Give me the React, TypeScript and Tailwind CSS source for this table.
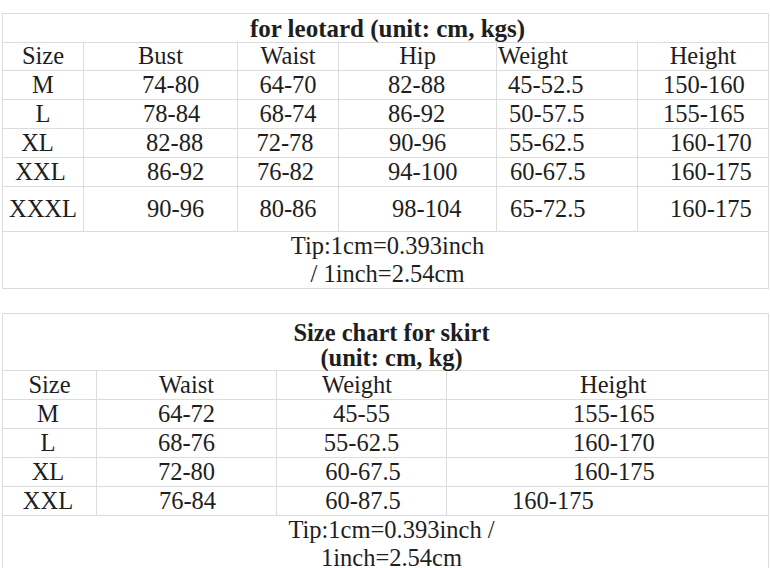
import React from "react";

type Cell = [string, string];

const t1Rows: Cell[][] = [
  [
    ["Size", "justify-center"],
    ["Bust", "justify-center"],
    ["Waist", "justify-center"],
    ["Hip", "justify-center"],
    ["Weight", "justify-start pl-[1px]"],
    ["Height", "justify-center"],
  ],
  [
    ["M", "justify-center"],
    ["74-80", "justify-start pl-[58px]"],
    ["64-70", "justify-center"],
    ["82-88", "justify-start pl-[49px]"],
    ["45-52.5", "justify-start pl-[11px]"],
    ["150-160", "justify-start pl-[25px]"],
  ],
  [
    ["L", "justify-center"],
    ["78-84", "justify-start pl-[59px]"],
    ["68-74", "justify-center"],
    ["86-92", "justify-start pl-[49px]"],
    ["50-57.5", "justify-start pl-[12px]"],
    ["155-165", "justify-start pl-[25px]"],
  ],
  [
    ["XL", "justify-center pr-[11px]"],
    ["82-88", "justify-start pl-[62px]"],
    ["72-78", "justify-center pr-[6px]"],
    ["90-96", "justify-start pl-[50px]"],
    ["55-62.5", "justify-start pl-[12px]"],
    ["160-170", "justify-start pl-[32px]"],
  ],
  [
    ["XXL", "justify-center pr-[5px]"],
    ["86-92", "justify-start pl-[63px]"],
    ["76-82", "justify-center pr-[5px]"],
    ["94-100", "justify-start pl-[49px]"],
    ["60-67.5", "justify-start pl-[13px]"],
    ["160-175", "justify-start pl-[32px]"],
  ],
  [
    ["XXXL", "justify-center"],
    ["90-96", "justify-start pl-[63px]"],
    ["80-86", "justify-center"],
    ["98-104", "justify-start pl-[53px]"],
    ["65-72.5", "justify-start pl-[13px]"],
    ["160-175", "justify-start pl-[32px]"],
  ],
];

const t2Rows: Cell[][] = [
  [
    ["Size", "justify-center"],
    ["Waist", "justify-center"],
    ["Weight", "justify-start pl-[45px]"],
    ["Height", "justify-start pl-[133px]"],
  ],
  [
    ["M", "justify-center pr-[3px]"],
    ["64-72", "justify-center"],
    ["45-55", "justify-center"],
    ["155-165", "justify-start pl-[126px]"],
  ],
  [
    ["L", "justify-center pr-[3px]"],
    ["68-76", "justify-center"],
    ["55-62.5", "justify-center"],
    ["160-170", "justify-start pl-[126px]"],
  ],
  [
    ["XL", "justify-center pr-[3px]"],
    ["72-80", "justify-center"],
    ["60-67.5", "justify-center pl-[3px]"],
    ["160-175", "justify-start pl-[126px]"],
  ],
  [
    ["XXL", "justify-center pr-[3px]"],
    ["76-84", "justify-center pl-[2px]"],
    ["60-87.5", "justify-center pl-[3px]"],
    ["160-175", "justify-start pl-[65px]"],
  ],
];

function Row({ cells }: { cells: Cell[] }) {
  return (
    <>
      {cells.map(([text, cls], i) => (
        <div key={i} className={`flex items-center bg-white whitespace-nowrap ${cls}`}>
          {text}
        </div>
      ))}
    </>
  );
}

export default function App() {
  return (
    <div className="h-[568px] w-[770px] overflow-hidden bg-white pt-[13px] [font-family:'Liberation_Serif','Times_New_Roman',serif] text-[24.5px] leading-none text-[#1e1e1e]">
      {/* Leotard table */}
      <div className="ml-[2px] grid w-[767px] grid-cols-[80px_153px_100px_157px_140px_130px] grid-rows-[28px_27px_28px_28px_28px_28px_44px_56px] gap-px bg-[#dcdcdc] p-px">
        <div className="col-span-6 flex items-center justify-center bg-white pl-[4px] text-[25px] font-bold">
          for leotard (unit: cm, kgs)
        </div>
        {t1Rows.map((r, i) => (
          <Row key={i} cells={r} />
        ))}
        <div className="col-span-6 flex flex-col items-center justify-center bg-white pl-[4px] leading-[28px]">
          <span>Tip:1cm=0.393inch</span>
          <span>/ 1inch=2.54cm</span>
        </div>
      </div>

      {/* Skirt table */}
      <div className="ml-[2px] mt-[24px] grid w-[767px] grid-cols-[93px_179px_169px_321px] grid-rows-[56px_28px_28px_28px_28px_28px_56px] gap-px bg-[#dcdcdc] p-px">
        <div className="col-span-4 flex flex-col items-center justify-start bg-white pl-[12px] pt-[6px] text-[24.5px] font-bold leading-[25px]">
          <span>Size chart for skirt</span>
          <span>(unit: cm, kg)</span>
        </div>
        {t2Rows.map((r, i) => (
          <Row key={i} cells={r} />
        ))}
        <div className="col-span-4 flex flex-col items-center justify-start bg-white pl-[12px]">
          <span className="leading-[28px]">Tip:1cm=0.393inch /</span>
          <span className="mt-[4px] leading-[20px]">1inch=2.54cm</span>
        </div>
      </div>
    </div>
  );
}
